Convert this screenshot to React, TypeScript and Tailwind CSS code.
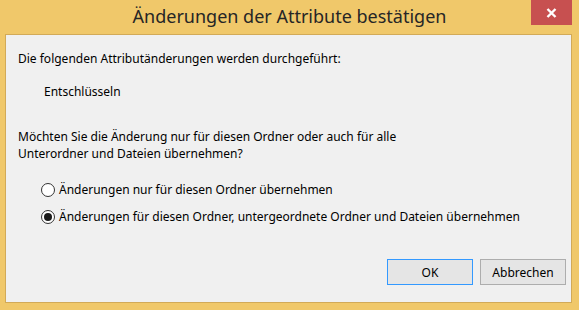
export default function App() {
  return (
    <div
      className="w-[579px] h-[310px] bg-[#f0c86a] flex flex-col overflow-hidden"
      style={{ fontFamily: '"Noto Sans", "Open Sans", sans-serif' }}
    >
      {/* Title bar */}
      <div className="relative h-[34px] shrink-0 flex items-start justify-center">
        <span className="mt-[4px] text-[18px] leading-[24px] text-[#262626]">
          Änderungen der Attribute bestätigen
        </span>
        <button className="absolute top-0 right-[7px] w-[41px] h-[25px] bg-[#c75050] flex items-center justify-center">
          <svg width="11" height="10" viewBox="0 0 11 10">
            <path d="M1.5 1 L9.5 9 M9.5 1 L1.5 9" stroke="white" strokeWidth="2.4" />
          </svg>
        </button>
      </div>

      {/* Client area */}
      <div className="ml-[5px] mr-[7px] mb-[7px] flex-1 bg-[#f0f0f0] border border-[#d2aa58] text-[12px] leading-[17px] text-black flex flex-col">
        <p className="mt-[15px] ml-[12px]">Die folgenden Attributänderungen werden durchgeführt:</p>
        <p className="mt-[16px] ml-[38px]">Entschlüsseln</p>
        <p className="mt-[28px] ml-[12px]">
          Möchten Sie die Änderung nur für diesen Ordner oder auch für alle
          <br />
          Unterordner und Dateien übernehmen?
        </p>

        <div className="mt-[20px] ml-[35px] flex flex-col gap-[12px]">
          <label className="flex items-center gap-[4px] h-[15px]">
            <span className="w-[14px] h-[14px] rounded-full border border-[#333] bg-white" />
            <span>Änderungen nur für diesen Ordner übernehmen</span>
          </label>
          <label className="flex items-center gap-[4px] h-[15px]">
            <span className="w-[14px] h-[14px] rounded-full border border-[#333] bg-white flex items-center justify-center">
              <span className="w-[8px] h-[8px] rounded-full bg-[#1a1a1a]" />
            </span>
            <span>Änderungen für diesen Ordner, untergeordnete Ordner und Dateien übernehmen</span>
          </label>
        </div>

        <div className="mt-auto mb-[17px] mr-[5px] flex justify-end gap-[7px]">
          <button className="w-[86px] h-[26px] bg-[#e5e5e5] border border-[#3399ff] text-[12px]">OK</button>
          <button className="w-[86px] h-[26px] bg-[#e5e5e5] border border-[#adadad] text-[12px]">Abbrechen</button>
        </div>
      </div>
    </div>
  )
}
